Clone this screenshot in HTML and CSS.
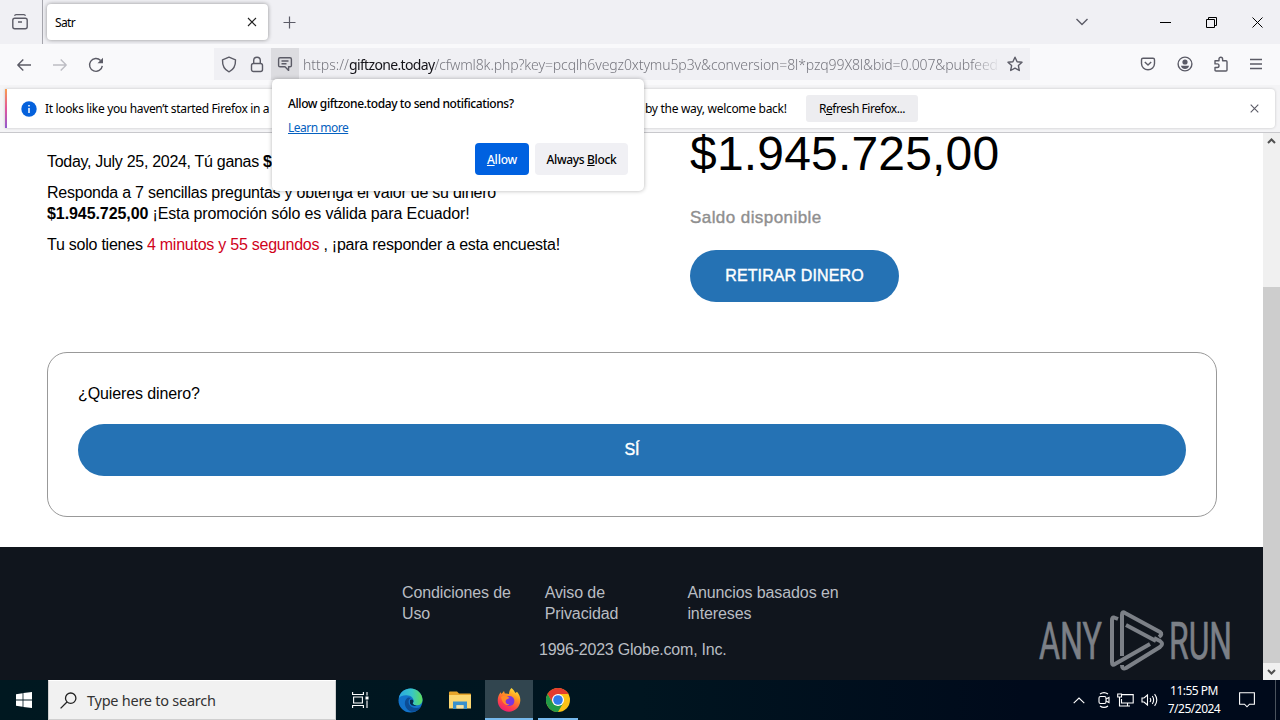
FILE: index.html
```html
<!DOCTYPE html>
<html lang="es">
<head>
    <meta charset="UTF-8">
    <meta name="viewport" content="width=device-width, initial-scale=1.0">
    <title>Satr</title>
    <link rel="stylesheet" href="styles.css">
</head>
<body>
<div class="tab-bar">
    <div class="view-button">
        <svg class="icon" width="18" height="18" viewBox="0 0 18 18"><rect x="1.8" y="5.3" width="14.4" height="10.4" rx="2"/><path d="M3.5 2.7 Q4 1.6 5 1.6 H13 Q14 1.6 14.5 2.7 M7 9 H11"/></svg>
    </div>
    <div class="tab">
        <span class="tab-title">Satr</span>
        <svg class="icon dark" width="10" height="10" viewBox="0 0 10 10"><path d="M1 1 L9 9 M9 1 L1 9"/></svg>
    </div>
    <svg class="icon new-tab" width="14" height="14" viewBox="0 0 14 14"><path d="M6.5 .5 V12.5 M.5 6.5 H12.5"/></svg>
    <div class="window-controls">
        <svg class="icon chevron" width="14" height="8" viewBox="0 0 14 8"><path d="M1.5 1 L7 6.5 L12.5 1"/></svg>
        <svg class="icon black" width="11" height="11" viewBox="0 0 11 11"><path d="M0 5.5 H11"/></svg>
        <svg class="icon black" width="11" height="11" viewBox="0 0 11 11"><path d="M.5 2.5 H8.5 V10.5 H.5 Z M2.5 2.5 V.5 H10.5 V8.5 H8.5"/></svg>
        <svg class="icon black" width="11" height="11" viewBox="0 0 11 11"><path d="M.5 .5 L10.5 10.5 M10.5 .5 L.5 10.5"/></svg>
    </div>
</div>

<div class="nav-bar">
    <div class="nav-buttons">
        <svg class="icon" width="16" height="16" viewBox="0 0 16 16"><path d="M15 8 H2 M7.3 2.5 L1.8 8 L7.3 13.5"/></svg>
        <svg class="icon disabled" width="16" height="16" viewBox="0 0 16 16"><path d="M1 8 H14 M8.7 2.5 L14.2 8 L8.7 13.5"/></svg>
        <svg class="icon" width="16" height="16" viewBox="0 0 16 16"><path d="M14.3 8.8 A6.4 6.4 0 1 1 12.6 3.5"/><path class="solid" d="M15 .8 V6.3 H9.5 Z"/></svg>
    </div>
    <div class="url-bar">
        <svg class="icon shield" width="16" height="17" viewBox="0 0 16 17"><path d="M8 1.2 L14.5 3.8 C14.7 9.5 12.2 14 8 15.8 C3.8 14 1.3 9.5 1.5 3.8 Z"/></svg>
        <svg class="icon lock" width="14" height="17" viewBox="0 0 14 17"><rect x="1.5" y="7.5" width="11" height="8" rx="2"/><path d="M3.7 7.5 V4.5 A3.3 3.3 0 0 1 10.3 4.5 V7.5"/></svg>
        <div class="permission">
            <svg class="icon" width="16" height="16" viewBox="0 0 16 16"><path d="M3 1.8 H13 Q14.4 1.8 14.4 3.2 V9.4 Q14.4 10.8 13 10.8 H11.6 V14.4 L8 10.8 H3 Q1.6 10.8 1.6 9.4 V3.2 Q1.6 1.8 3 1.8 Z M4.5 5 H11.5 M4.5 7.7 H9.5"/></svg>
        </div>
        <div class="url"><span class="url-scheme">https://</span><span class="url-host">giftzone.today</span><span class="url-path">/cfwml8k.php?key=pcqlh6vegz0xtymu5p3v&amp;conversion=8l*pzq99X8l&amp;bid=0.007&amp;pubfeed</span></div>
        <svg class="icon star" width="16" height="16" viewBox="0 0 16 16"><path d="M8 1.2 L10.1 5.7 L15 6.3 L11.4 9.6 L12.3 14.5 L8 12.1 L3.7 14.5 L4.6 9.6 L1 6.3 L5.9 5.7 Z"/></svg>
    </div>
    <div class="nav-tools">
        <svg class="icon" width="16" height="16" viewBox="0 0 16 16"><path d="M3 2.2 H13 Q14.5 2.2 14.5 3.7 V7.5 A6.5 6.3 0 0 1 1.5 7.5 V3.7 Q1.5 2.2 3 2.2 Z M4.8 6 L8 9 L11.2 6"/></svg>
        <svg class="icon" width="16" height="16" viewBox="0 0 16 16"><circle cx="8" cy="8" r="6.9"/><circle class="solid" cx="8" cy="6" r="2.6"/><path class="solid" d="M3.9 9.8 H12.1 Q11 13 8 13 Q5 13 3.9 9.8 Z"/></svg>
        <svg class="icon" width="16" height="17" viewBox="0 0 16 17"><path d="M2 4.7 H6 V3 A1.8 1.8 0 0 1 9.6 3 V4.7 H13 Q14 4.7 14 5.7 V14 Q14 15 13 15 H3 Q2 15 2 14 V11.5 H4.2 A1.7 1.7 0 0 0 4.2 7.9 H2 Z"/></svg>
        <svg class="icon" width="14" height="12" viewBox="0 0 14 12"><path d="M1 1.5 H13 M1 6 H13 M1 10.5 H13"/></svg>
    </div>
</div>

<div class="info-area">
    <div class="info-bar">
        <svg class="info-icon" width="16" height="16" viewBox="0 0 16 16"><circle cx="8" cy="8" r="7.7" fill="#0561dc"/><path d="M8 4 V5.6 M8 7 V12" stroke="#fff" stroke-width="1.5"/></svg>
        <span class="info-start">It looks like you haven’t started Firefox in a</span>
        <span class="info-end">by the way, welcome back!</span>
        <span class="refresh">R<u>e</u>fresh Firefox...</span>
        <svg class="icon info-close" width="9" height="9" viewBox="0 0 9 9"><path d="M.7 .7 L8.3 8.3 M8.3 .7 L.7 8.3"/></svg>
    </div>
</div>

<div class="viewport">
    <div class="page">
        <div class="summary">
            <div class="intro">
                <p class="today">Today, July 25, 2024, Tú ganas <b>$</b></p>
                <p>Responda a 7 sencillas preguntas y obtenga el valor de su dinero<br><b>$1.945.725,00</b> <span class="promo">¡Esta promoción sólo es válida para Ecuador!</span></p>
                <p>Tu solo tienes <span class="timer">4 minutos y 55 segundos</span> , ¡para responder a esta encuesta!</p>
            </div>
            <div class="balance">
                <div class="amount">$1.945.725,00</div>
                <div class="balance-label">Saldo disponible</div>
                <div class="pill withdraw">RETIRAR DINERO</div>
            </div>
        </div>
        <div class="question">
            <p>¿Quieres dinero?</p>
            <div class="pill">SÍ</div>
        </div>
        <div class="footer">
            <div class="footer-links">
                <span>Condiciones de<br>Uso</span>
                <span>Aviso de<br>Privacidad</span>
                <span>Anuncios basados en<br>intereses</span>
            </div>
            <div class="copyright">1996-2023 Globe.com, Inc.</div>
        </div>
    </div>
    <div class="scrollbar">
        <svg class="scroll-arrow" width="9" height="6" viewBox="0 0 9 6"><path d="M1 5 L4.5 1.5 L8 5"/></svg>
        <div class="thumb"></div>
        <svg class="scroll-arrow" width="9" height="6" viewBox="0 0 9 6"><path d="M1 1 L4.5 4.5 L8 1"/></svg>
    </div>
</div>

<div class="popup">
    <div class="popup-title">Allow giftzone.today to send notifications?</div>
    <div class="popup-link">Learn more</div>
    <div class="popup-buttons">
        <span class="allow"><u>A</u>llow</span>
        <span class="block">Always <u>B</u>lock</span>
    </div>
</div>

<svg class="watermark" width="210" height="72" viewBox="0 0 210 72">
    <text x="1" y="50" textLength="63" lengthAdjust="spacingAndGlyphs">ANY</text>
    <text x="131" y="50" textLength="63" lengthAdjust="spacingAndGlyphs">RUN</text>
    <path d="M80 10 L76 8.5 Q74 8 74 11 V53 Q74 57 77 55 L112 35"/>
    <path d="M84 47 V6 Q84 2 87 4 L122 23 Q125 25 121 28"/>
    <path d="M88 16 L118 32 M84 56 Q84 61 88 59 L122 38 Q126 35 122 32 L116 29"/>
</svg>

<div class="taskbar">
    <div class="start">
        <svg width="16" height="16" viewBox="0 0 16 16" fill="#fff"><path d="M0 2.2 L6.6 1.3 V7.6 H0 Z M7.4 1.1 L16 0 V7.6 H7.4 Z M0 8.4 H6.6 V14.7 L0 13.8 Z M7.4 8.4 H16 V16 L7.4 14.9 Z"/></svg>
    </div>
    <div class="search">
        <svg width="17" height="17" viewBox="0 0 17 17" fill="none" stroke="#222" stroke-width="1.3"><circle cx="10.7" cy="6.2" r="5.2"/><path d="M7 10 L.6 16.4"/></svg>
        <span>Type here to search</span>
    </div>
    <div class="task">
        <svg width="17" height="16" viewBox="0 0 17 16" fill="none" stroke="#fff" stroke-width="1.1"><path d="M.6 0 V2.5 H11.4 V0 M.6 16 V13.5 H11.4 V16 M1.6 5 H10.4 V11 H1.6 Z M15 0 V3.5 M15 8.5 V16"/><path d="M13.5 4.5 H16.5 V7.5 H13.5 Z" fill="#fff" stroke="none"/></svg>
    </div>
    <div class="task">
        <svg width="25" height="25" viewBox="0 0 25 25">
            <defs>
                <linearGradient id="edgeTop" x1="0" y1="0" x2="1" y2="0"><stop offset="0" stop-color="#2aa7e0"/><stop offset=".55" stop-color="#38c6c8"/><stop offset="1" stop-color="#5fdd5b"/></linearGradient>
            </defs>
            <circle cx="12.5" cy="12.5" r="12" fill="#1273cb"/>
            <path d="M1 10 C2 4 7 .5 12.5 .5 C19.5 .5 24.5 6 24.5 11.8 C24.5 15.5 21.5 17.5 18.5 17.5 C15.5 17.5 14.3 16.4 15.2 14.8 C16.4 12.5 15 8 10 7.5 C6 7 2.5 8 1 10 Z" fill="url(#edgeTop)"/>
            <path d="M10 9.5 C5.5 12 5.5 20 12 23.2 C16 25 20.5 22.5 22.8 19 C18 21.5 12.5 19.5 11 16 C10 13.5 10.8 11 13 9.8 Z" fill="#0c4d96"/>
            <path d="M12 12 Q15 10.5 15.5 13 Q15 14.5 14.6 15.5 Q16 18 20 17.5 Q13.5 19 12 15.5 Z" fill="#062a4d"/>
        </svg>
    </div>
    <div class="task">
        <svg width="22" height="19" viewBox="0 0 22 19"><path d="M0 1.5 Q0 .5 1 .5 H8 L10 2.5 H21 Q22 2.5 22 3.5 V17 H0 Z" fill="#e7a52b"/><path d="M0 4 H22 V17.5 H0 Z" fill="#fcd771"/><path d="M4 18 V10.5 H18 V18 H14.5 V14.2 H7.5 V18 Z" fill="#3a91cd"/><path d="M7.5 14.2 H14.5 V17.5 H7.5 Z" fill="#f5e3a8"/></svg>
    </div>
    <div class="task active">
        <svg width="24" height="24" viewBox="0 0 24 24">
            <defs>
                <linearGradient id="fox" x1=".8" y1="0" x2=".3" y2="1"><stop offset="0" stop-color="#ffe83c"/><stop offset=".35" stop-color="#ff9a1f"/><stop offset=".7" stop-color="#ff4745"/><stop offset="1" stop-color="#ee1b75"/></linearGradient>
            </defs>
            <path d="M14.5 0 C17 2 17.5 3.8 18.5 5 L20 3.8 C22.5 6.5 23.5 9.5 23.3 12.8 C23 19 18 23.7 12 23.7 C5.5 23.7 .7 18.8 .7 12.5 C.7 9 2 6 3.8 4.3 L4.5 6 L7 3 L7.8 5.6 C9.5 5.4 11 5.7 12 6 C12 4 12.8 1.5 14.5 0 Z" fill="url(#fox)"/>
            <circle cx="12.4" cy="13" r="5" fill="#7a35dd"/>
            <path d="M4 9 C7 6.5 11 8 12.5 10 L9.5 11.5 C7.5 13.5 9.2 16.5 12.5 16.5 C9 18.5 5 15 4 9 Z" fill="#ff8b26"/>
        </svg>
    </div>
    <div class="task open">
        <svg width="24" height="24" viewBox="0 0 24 24"><circle cx="12" cy="12" r="12" fill="#fbc116"/><path d="M1.6 6 A12 12 0 0 1 22.4 6 L12 6 L6.8 15 Z" fill="#e33b2e"/><path d="M1.6 6 L6.8 15 L12 18 L17.2 15 L12 24 A12 12 0 0 1 1.6 6 Z" fill="#229a48"/><circle cx="12" cy="12" r="6" fill="#fff"/><circle cx="12" cy="12" r="4.8" fill="#2e7bea"/></svg>
    </div>
    <div class="tray">
        <svg width="12" height="7" viewBox="0 0 12 7"><path d="M.7 6.2 L6 1 L11.3 6.2"/></svg>
        <svg width="12" height="16" viewBox="0 0 12 16"><rect x="1" y="4.5" width="7" height="7" rx="1.5"/><path d="M8 7 L11 5.5 V10.5 L8 9 M2 2 Q6 -.8 10 2 M2 14 Q6 16.8 10 14"/></svg>
        <svg width="17" height="14" viewBox="0 0 17 14"><path d="M5 1.6 H16.2 V10 H4.5 V6 M8 13 H13 M10.5 10 V13 M.7 1 H4.5 V4 H.7 Z M2.5 4 V13 H8"/></svg>
        <svg width="17" height="14" viewBox="0 0 17 14"><path d="M1 5 H3 L6.5 2 V12 L3 9 H1 Z M9 5 Q10.5 7 9 9 M11.3 3 Q14 7 11.3 11 M13.6 1.2 Q18 7 13.6 12.8"/></svg>
        <div class="clock">
            <span class="time">11:55 PM</span>
            <span class="date">7/25/2024</span>
        </div>
        <svg width="16" height="16" viewBox="0 0 16 16"><path d="M.6 .8 H15.4 V12.2 H10.5 L8 14.8 L5.5 12.2 H.6 Z"/></svg>
        <div class="show-desktop"></div>
    </div>
</div>
</body>
</html>
```
FILE: styles.css
```css
* {
    box-sizing: border-box;
}
body {
    width: 1280px;
    height: 720px;
    margin: 0;
    position: relative;
    display: flex;
    flex-direction: column;
    overflow: hidden;
    background: #fff;
    color: #000;
    font-family: "Noto Sans", "Open Sans", sans-serif;
    font-size: 12px;
    white-space: nowrap;
}
svg {
    display: block;
    flex: none;
}
.icon {
    fill: none;
    stroke: #5b5b66;
    stroke-width: 1.4;
    stroke-linejoin: round;
}
.icon .solid {
    fill: #5b5b66;
    stroke: none;
}
.dark {
    stroke: #222;
    stroke-width: 1.1;
}
.black {
    stroke: #000;
    stroke-width: 1;
    stroke-linejoin: miter;
}
.disabled {
    stroke: #bdbdc4;
}

/* tabs */
.tab-bar {
    height: 44px;
    flex: none;
    display: flex;
    background: #f0f0f4;
}
.view-button {
    width: 43px;
    padding: 13px 0 0 11px;
    border-right: 1px solid #a5a5ac;
}
.tab {
    width: 221px;
    height: 36px;
    margin: 4px 0 0 4px;
    padding: 0 11px 0 8px;
    display: flex;
    align-items: center;
    justify-content: space-between;
    background: #fff;
    border-radius: 4px;
    box-shadow: 0 0 4px rgba(0, 0, 0, 0.4);
}
.tab-title {
    letter-spacing: -0.6px;
}
.new-tab {
    margin: 16px 0 0 15px;
    stroke-width: 1.2;
}
.window-controls {
    margin-left: auto;
    padding: 0 17px 0 0;
    height: 44px;
    display: flex;
    align-items: center;
    gap: 35px;
}
.chevron {
    margin-right: 36px;
}

/* navigation */
.nav-bar {
    height: 41px;
    flex: none;
    display: flex;
    background: #f9f9fb;
}
.nav-buttons {
    width: 214px;
    padding: 13px 0 0 16px;
    display: flex;
    gap: 20px;
}
.url-bar {
    width: 816px;
    height: 32px;
    margin-top: 4px;
    display: flex;
    align-items: center;
    background: #f0f0f4;
}
.shield {
    margin-left: 7px;
}
.lock {
    margin-left: 13px;
}
.permission {
    width: 28px;
    height: 32px;
    margin: 0 4px 0 7px;
    padding: 8px 6px;
    background: #dcdce0;
}
.url {
    width: 698px;
    overflow: hidden;
    font-size: 14px;
    color: #77777f;
    font-weight: 300;
    mask-image: linear-gradient(to left, transparent, #000 30px);
}
.url-host {
    color: #15141a;
    font-weight: 400;
    letter-spacing: -0.65px;
}
.url-path {
    letter-spacing: -0.11px;
}
.star {
    margin-left: 6px;
}
.nav-tools {
    margin-left: auto;
    padding: 12px 17px 0 0;
    display: flex;
    gap: 20px;
}
.nav-tools .icon:first-child {
    margin-right: 1px;
}
.nav-tools .icon:last-child {
    margin-top: 2px;
}

/* info bar */
.info-area {
    height: 48px;
    flex: none;
    padding: 4px 5px 4px 5px;
    background: #f4f4f6;
    border-bottom: 1px solid #c8c8cc;
}
.info-bar {
    height: 39px;
    display: flex;
    align-items: center;
    background: #fff;
    border-radius: 0 4px 4px 0;
    box-shadow: 0 0 3px rgba(0, 0, 0, 0.2);
    border-left: 2px solid;
    border-image: linear-gradient(#f9a14a, #e2559c, #8d5bd0) 1;
}
.info-icon {
    margin-left: 14px;
}
.info-start {
    width: 226px;
    margin-left: 8px;
    letter-spacing: -0.34px;
}
.info-end {
    width: 141px;
    margin-left: 374px;
    letter-spacing: -0.3px;
}
.refresh {
    width: 112px;
    height: 27px;
    margin-left: 20px;
    line-height: 27px;
    text-align: center;
    letter-spacing: -0.45px;
    background: #ededf0;
    border-radius: 3px;
}
.info-close {
    margin: 0 16px 0 auto;
    stroke-width: 1.1;
}

/* web page */
.viewport {
    height: 547px;
    flex: none;
    display: flex;
}
.page {
    width: 1263px;
    display: flex;
    flex-direction: column;
    font-family: "Liberation Sans", Arial, sans-serif;
    font-size: 16px;
    line-height: 21px;
}
.page p {
    margin: 0 0 10px;
}
.summary {
    height: 219px;
    padding-left: 47px;
    display: flex;
}
.intro {
    width: 643px;
    padding-top: 18px;
    letter-spacing: -0.24px;
}
.intro b {
    letter-spacing: -0.08px;
}
.today {
    letter-spacing: -0.3px;
}
.promo {
    letter-spacing: -0.13px;
}
.timer {
    color: #d0021b;
}
.amount {
    height: 54px;
    margin-top: -6px;
    font-size: 48px;
    line-height: 54px;
    letter-spacing: 0.18px;
}
.balance-label {
    margin-top: 26px;
    font-size: 17px;
    line-height: 21px;
    letter-spacing: 0.43px;
    color: #8f8f8f;
    -webkit-text-stroke: 0.4px #8f8f8f;
}
.pill {
    height: 52px;
    border-radius: 26px;
    background: #2572b4;
    color: #fff;
    line-height: 51px;
    text-align: center;
    -webkit-text-stroke: 0.4px #fff;
}
.withdraw {
    width: 209px;
    margin-top: 22px;
    letter-spacing: 0.12px;
}
.question {
    width: 1170px;
    height: 165px;
    margin: 0 0 30px 47px;
    padding: 30px;
    border: 1px solid #999;
    border-radius: 20px;
}
.question p {
    margin-bottom: 20px;
    letter-spacing: -0.12px;
}
.footer {
    height: 133px;
    padding-top: 35px;
    background: #10151d;
    color: #b9bdc3;
}
.footer-links {
    padding-left: 402px;
    display: flex;
    letter-spacing: -0.1px;
}
.footer-links span {
    width: 142.7px;
}
.copyright {
    margin-top: 15px;
    padding-left: 539px;
    letter-spacing: -0.22px;
}
.scrollbar {
    width: 17px;
    padding: 5px 0;
    display: flex;
    flex-direction: column;
    align-items: center;
    justify-content: space-between;
    background: #f0f0f0;
}
.scroll-arrow {
    fill: none;
    stroke: #505050;
    stroke-width: 2;
}
.thumb {
    width: 17px;
    height: 376px;
    margin: 143px 0 auto;
    background: #cdcdcd;
}

/* permission popup, drawn over the page */
.popup {
    position: absolute;
    left: 272px;
    top: 79px;
    width: 372px;
    height: 112px;
    padding: 16px;
    background: #fff;
    border-radius: 5px;
    box-shadow: 0 0 4px rgba(0, 0, 0, 0.3);
}
.popup-title {
    line-height: 18px;
    font-weight: 500;
    letter-spacing: -0.4px;
}
.popup-link {
    margin-top: 6px;
    line-height: 18px;
    letter-spacing: -0.5px;
    color: #0561c0;
    text-decoration: underline;
}
.popup-buttons {
    margin-top: 6px;
    display: flex;
    justify-content: flex-end;
    gap: 6px;
    line-height: 33px;
    text-align: center;
    font-weight: 500;
    letter-spacing: -0.35px;
}
.allow {
    width: 54px;
    height: 32px;
    border-radius: 4px;
    background: #0061e0;
    color: #fff;
    letter-spacing: -0.2px;
}
.block {
    width: 93px;
    height: 32px;
    border-radius: 4px;
    background: #f0f0f4;
}
.watermark {
    position: absolute;
    left: 1038px;
    top: 609px;
    fill: none;
    stroke: #7c8087;
    stroke-width: 4;
    stroke-linejoin: round;
}
.watermark text {
    fill: #7c8087;
    stroke-width: 0.7;
    font-family: Roboto, sans-serif;
    font-size: 52px;
    font-weight: 400;
}

/* taskbar */
.taskbar {
    height: 40px;
    flex: none;
    position: relative;
    display: flex;
    background: linear-gradient(90deg, #001820, #001520 50%, #000a1b 80%);
}
.start {
    width: 48px;
    padding: 12px 16px;
}
.search {
    width: 288px;
    padding-left: 11px;
    display: flex;
    align-items: center;
    gap: 10px;
    background: #f1f1f1;
    border: 1px solid #cfcfcf;
    border-top-color: #fff;
    color: #333;
    font-size: 14.5px;
    letter-spacing: -0.25px;
}
.task {
    width: 48px;
    margin-right: 2px;
    display: flex;
    align-items: center;
    justify-content: center;
}
.task.active {
    margin: 0 1px 0 -1px;
    padding-top: 2px;
    background: #31454f;
    border-bottom: 2px solid #76b9ed;
}
.task.open {
    position: relative;
}
.task.open::after {
    content: "";
    position: absolute;
    left: 4px;
    bottom: 0;
    width: 40px;
    height: 2px;
    background: #76b9ed;
}
.tray {
    margin-left: auto;
    display: flex;
    align-items: center;
    color: #fff;
}
.tray svg {
    margin-right: 7px;
    fill: none;
    stroke: #fff;
    stroke-width: 1.1;
}
.tray svg:first-child {
    margin-right: 13px;
}
.tray svg:last-of-type {
    margin-right: 20px;
}
.clock {
    width: 60px;
    margin: 0 15px 0 -1px;
    display: flex;
    flex-direction: column;
    align-items: center;
    line-height: 18px;
    letter-spacing: -0.5px;
}
.show-desktop {
    width: 5px;
    height: 40px;
    border-left: 1px solid #4a535d;
}
```
